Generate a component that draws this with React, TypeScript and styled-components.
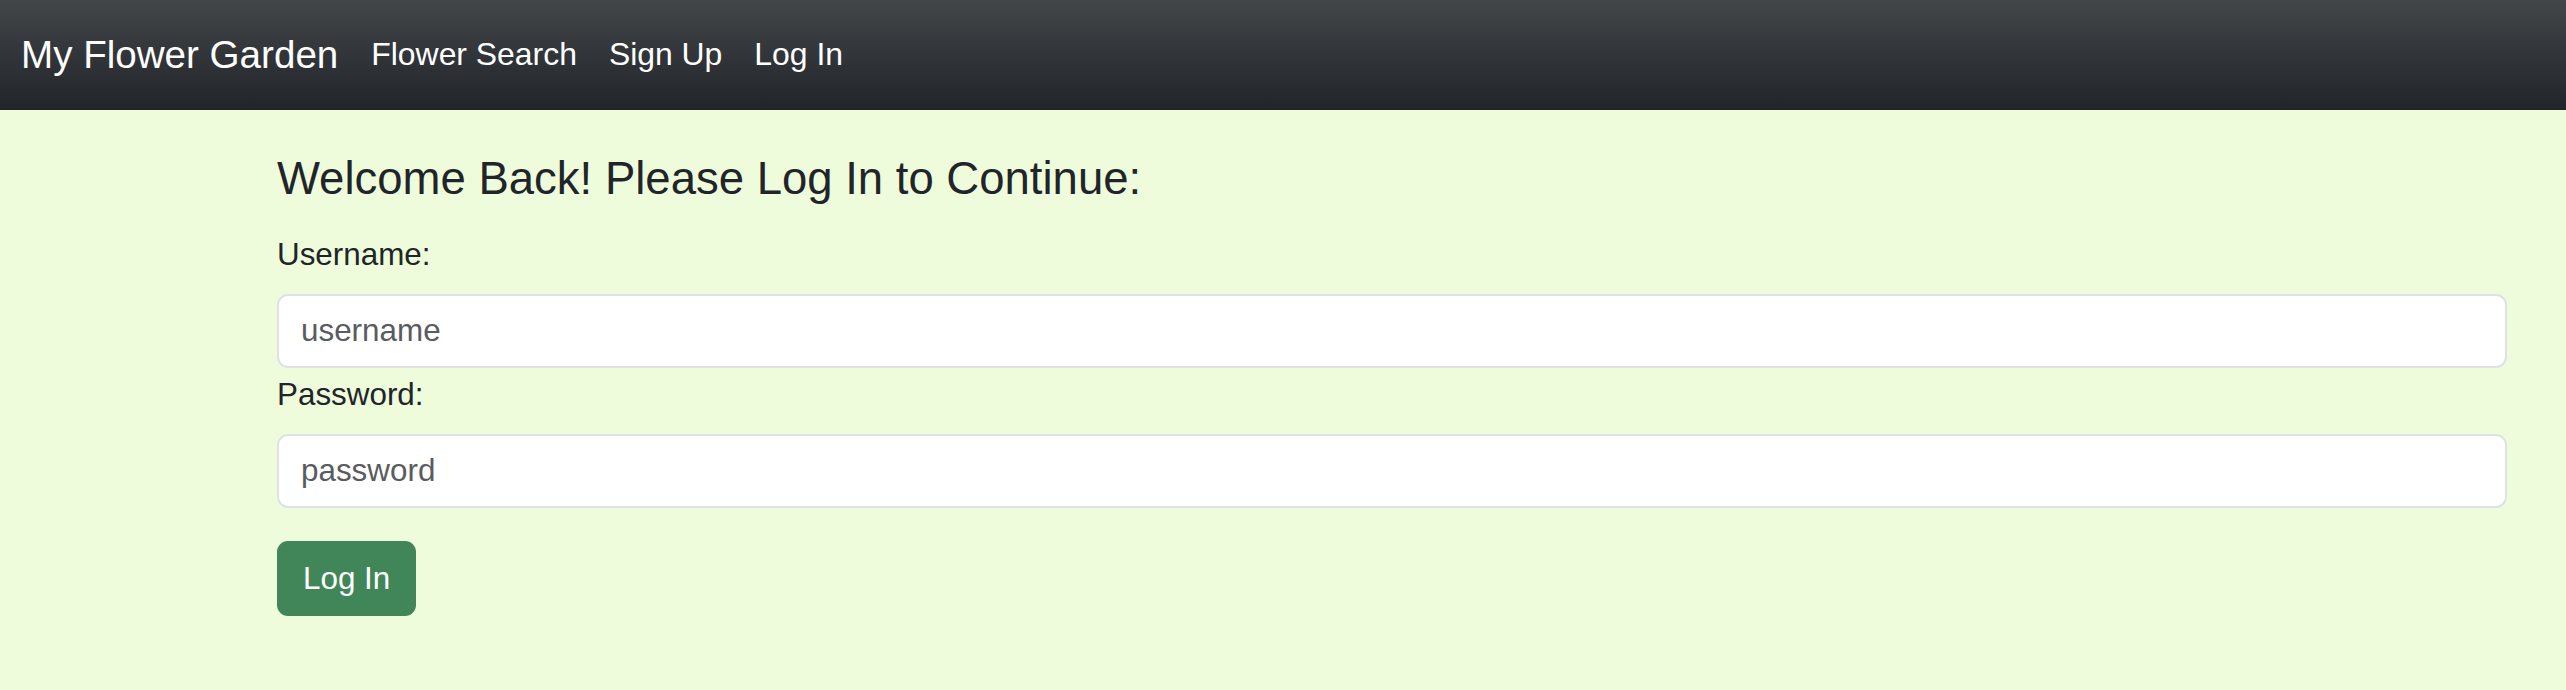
import React from "react";
import styled, { createGlobalStyle } from "styled-components";

const GlobalStyle = createGlobalStyle`
  html, body {
    margin: 0;
    padding: 0;
    background: #eefcdc;
  }
  body {
    font-family: "Liberation Sans", Helvetica, Arial, sans-serif;
    color: #212529;
    -webkit-font-smoothing: antialiased;
  }
  * { box-sizing: border-box; }
`;

const Navbar = styled.nav`
  height: 110px;
  display: flex;
  align-items: center;
  padding: 0 21px;
  background-color: #212529;
  background-image: linear-gradient(180deg, rgba(255, 255, 255, 0.15), rgba(255, 255, 255, 0));
`;

const Brand = styled.a`
  font-size: 38.6px;
  line-height: 1.5;
  color: #ffffff;
  text-decoration: none;
  margin-right: 17px;
  white-space: nowrap;
`;

const NavList = styled.ul`
  display: flex;
  align-items: center;
  list-style: none;
  margin: 0;
  padding: 0;
`;

const NavLink = styled.a`
  display: block;
  font-size: 31.9px;
  line-height: 1.5;
  padding: 0 16px;
  color: #ffffff;
  text-decoration: none;
  white-space: nowrap;
`;

const Main = styled.main`
  padding: 41.5px 59px 0 277px;
`;

const Heading = styled.h4`
  margin: 0 0 25px;
  font-size: 45.5px;
  font-weight: 400;
  line-height: 1.2;
  color: #212529;
`;

const Form = styled.form`
  display: flex;
  flex-direction: column;
  align-items: stretch;
`;

const Label = styled.label<{ $first?: boolean }>`
  display: block;
  font-size: 31.4px;
  line-height: 1.5;
  margin: ${(p) => (p.$first ? "0" : "3px")} 0 16px;
  color: #212529;
`;

const Input = styled.input`
  display: block;
  width: 100%;
  height: 74px;
  padding: 0 22px;
  font-family: inherit;
  font-size: 31.4px;
  color: #212529;
  background: #ffffff;
  border: 2px solid #dee2e6;
  border-radius: 11px;
  outline: none;
  &::placeholder {
    color: #595c5f;
    opacity: 1;
  }
`;

const SubmitButton = styled.button`
  align-self: flex-start;
  margin-top: 33px;
  height: 75px;
  padding: 0 26px;
  font-family: inherit;
  font-size: 31.4px;
  line-height: 1.5;
  color: #ffffff;
  background: #418658;
  border: none;
  border-radius: 11px;
  cursor: pointer;
`;

export default function App() {
  return (
    <>
      <GlobalStyle />
      <Navbar>
        <Brand href="#">My Flower Garden</Brand>
        <NavList>
          <li><NavLink href="#">Flower Search</NavLink></li>
          <li><NavLink href="#">Sign Up</NavLink></li>
          <li><NavLink href="#">Log In</NavLink></li>
        </NavList>
      </Navbar>
      <Main>
        <Heading>Welcome Back! Please Log In to Continue:</Heading>
        <Form onSubmit={(e) => e.preventDefault()}>
          <Label $first htmlFor="username">Username:</Label>
          <Input id="username" type="text" placeholder="username" />
          <Label htmlFor="password">Password:</Label>
          <Input id="password" type="password" placeholder="password" />
          <SubmitButton type="submit">Log In</SubmitButton>
        </Form>
      </Main>
    </>
  );
}
